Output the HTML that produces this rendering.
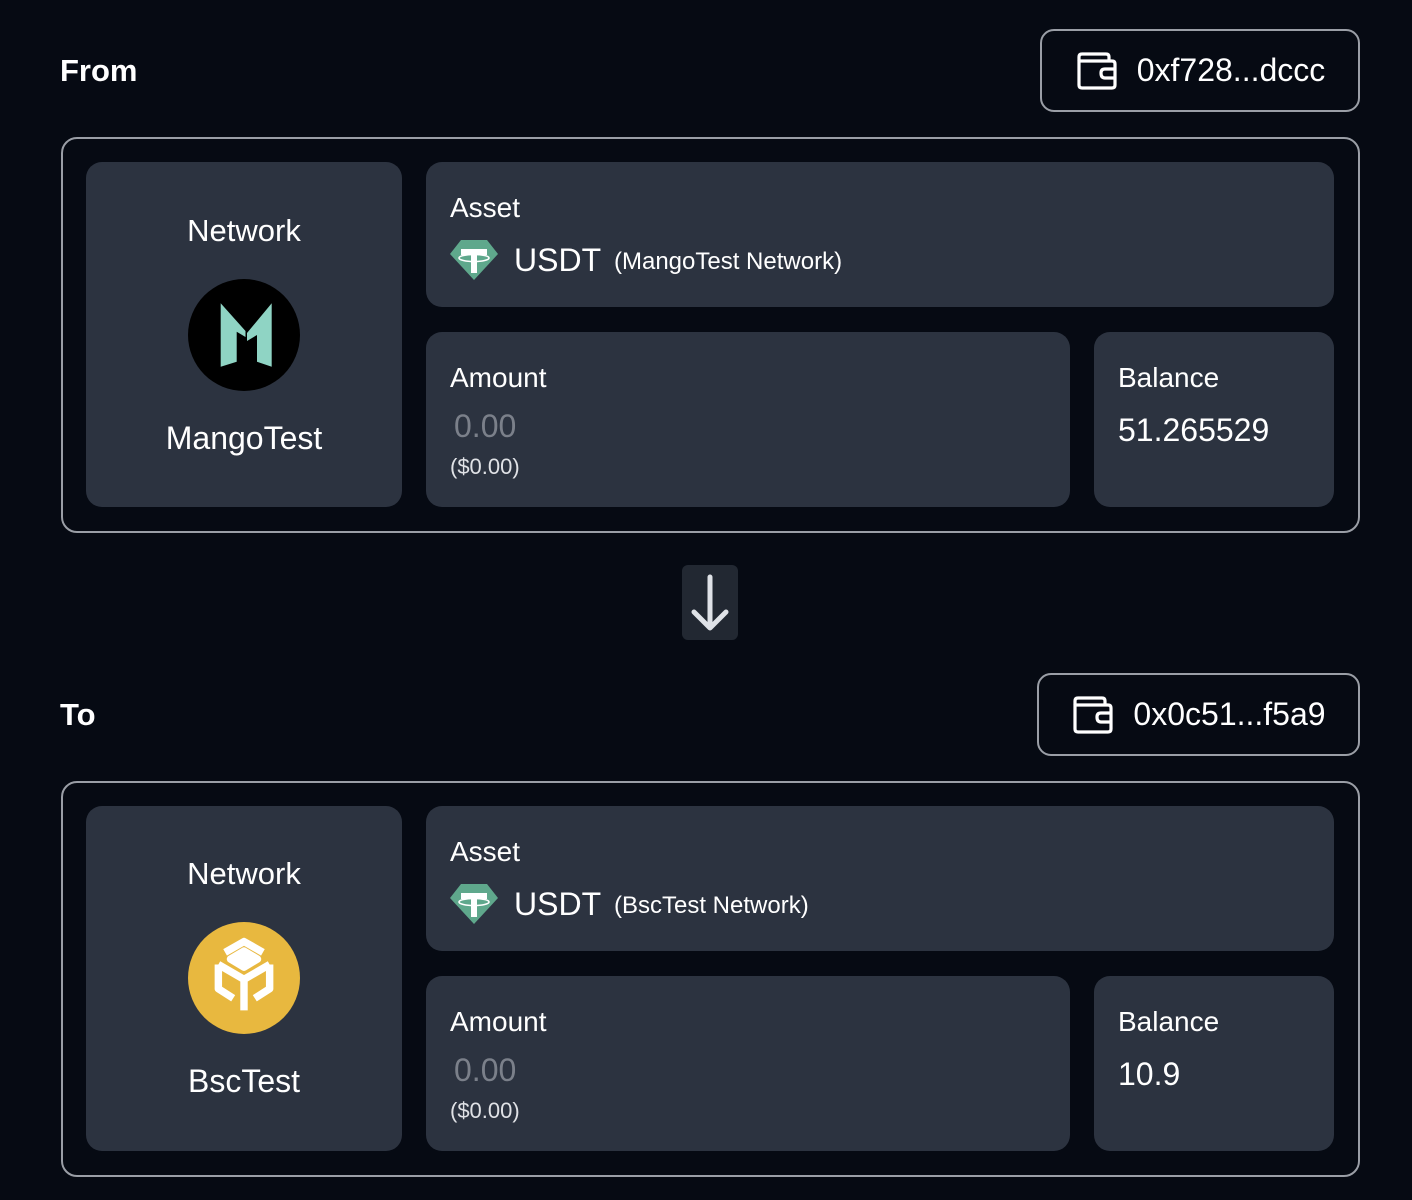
<!DOCTYPE html>
<html><head><style>
*{margin:0;padding:0;box-sizing:border-box}
body{width:1412px;height:1200px;background:#060a13;font-family:"Liberation Sans",sans-serif;color:#fff;position:relative;overflow:hidden}
.a{position:absolute}
.lbl{font-weight:bold;font-size:31px}
.btn{border:2px solid #9a9ea6;border-radius:14px;display:flex;align-items:center;justify-content:center;gap:18px;font-size:32px}
.box{border:2px solid #9a9ea6;border-radius:16px}
.card{background:#2c3340;border-radius:16px}
.t27{font-size:28px}
</style></head><body>
<svg width="0" height="0" style="position:absolute"><defs>
<symbol id="w" viewBox="0 0 44 44"><path d="M4 8 Q4 5 7 5 H31 Q34 5 34 8 V12 M4 12 H37 Q40 12 40 15 V36 Q40 39 37 39 H7 Q4 39 4 36 Z M40 20 H30 Q26 20 26 24 Q26 29 30 29 H40" fill="none" stroke="#fff" stroke-width="3.2" stroke-linejoin="round"/><path d="M4 8 V12" stroke="#fff" stroke-width="3.2"/></symbol>
<symbol id="t" viewBox="0 0 50 44"><path d="M12 2 H38 L49 16 L25 42 L1 16 Z" fill="#5fa88c"/><path d="M12 11 H38 V17 H28 V35 H22 V17 H12 Z" fill="#fff"/><ellipse cx="25" cy="20" rx="15" ry="3.5" fill="none" stroke="#fff" stroke-width="1.6"/></symbol>
</defs></svg>

<div class="a lbl" style="left:60px;top:53px">From</div>
<div class="a btn" style="left:1040px;top:29px;width:320px;height:83px"><svg width="44" height="44"><use href="#w"/></svg><span>0xf728...dccc</span></div>
<div class="a box" style="left:61px;top:137px;width:1299px;height:396px"></div>
<div class="a card" style="left:86px;top:162px;width:316px;height:345px"></div>
<div class="a" style="left:86px;top:213px;width:316px;text-align:center;font-size:31px">Network</div>
<svg class="a" style="left:188px;top:279px" width="112" height="112" viewBox="0 0 112 112"><circle cx="56" cy="56" r="56" fill="#000"/><path d="M32.7 24.3 L57.5 52 V58 L48.7 52.7 V82.7 L32.7 87.7 Z M83.7 24.3 L59 54 V62 L69 56 V82.7 L83.7 87.7 Z" fill="#8fd4c4"/></svg>
<div class="a" style="left:86px;top:420px;width:316px;text-align:center;font-size:32px">MangoTest</div>
<div class="card a" style="left:426px;top:162px;width:908px;height:145px"></div>
<div class="a t27" style="left:450px;top:192px">Asset</div>
<svg class="a" style="left:449px;top:238px" width="50" height="44"><use href="#t"/></svg>
<div class="a" style="left:514px;top:242px;font-size:32px">USDT</div>
<div class="a" style="left:614px;top:248px;font-size:24px">(MangoTest Network)</div>
<div class="card a" style="left:426px;top:332px;width:644px;height:175px"></div>
<div class="a t27" style="left:450px;top:362px">Amount</div>
<div class="a" style="left:454px;top:408px;font-size:32px;color:#7b808a">0.00</div>
<div class="a" style="left:450px;top:454px;font-size:22px;color:#e0e2e6">($0.00)</div>
<div class="card a" style="left:1094px;top:332px;width:240px;height:175px"></div>
<div class="a t27" style="left:1118px;top:362px">Balance</div>
<div class="a" style="left:1118px;top:412px;font-size:32px">51.265529</div>

<div class="a" style="left:682px;top:565px;width:56px;height:75px;background:#222832;border-radius:6px"></div>
<svg class="a" style="left:682px;top:565px" width="56" height="75"><path d="M28 12 V63 M12 47 L28 63 L44 47" fill="none" stroke="#dfe2e7" stroke-width="5" stroke-linecap="round" stroke-linejoin="round"/></svg>

<div class="a lbl" style="left:60px;top:697px">To</div>
<div class="a btn" style="left:1037px;top:673px;width:323px;height:83px"><svg width="44" height="44"><use href="#w"/></svg><span>0x0c51...f5a9</span></div>
<div class="a box" style="left:61px;top:781px;width:1299px;height:396px"></div>
<div class="a card" style="left:86px;top:806px;width:316px;height:345px"></div>
<div class="a" style="left:86px;top:856px;width:316px;text-align:center;font-size:31px">Network</div>
<svg class="a" style="left:188px;top:922px" width="112" height="112" viewBox="0 0 112 112"><circle cx="56" cy="56" r="56" fill="#e8b83f"/><g transform="translate(56 56) scale(1.35) translate(-56 -56)" fill="none" stroke="#fff" stroke-width="5.5" stroke-linejoin="round"><path d="M56 36 L66 42 L56 48 L46 42 Z" fill="#fff"/><path d="M37 46 V64 L48 71 M75 46 V64 L64 71 M42 37 L56 29 L70 37 M56 56 V80 M37 46 L56 57 L75 46"/></g></svg>
<div class="a" style="left:86px;top:1063px;width:316px;text-align:center;font-size:32px">BscTest</div>
<div class="card a" style="left:426px;top:806px;width:908px;height:145px"></div>
<div class="a t27" style="left:450px;top:836px">Asset</div>
<svg class="a" style="left:449px;top:882px" width="50" height="44"><use href="#t"/></svg>
<div class="a" style="left:514px;top:886px;font-size:32px">USDT</div>
<div class="a" style="left:614px;top:892px;font-size:24px">(BscTest Network)</div>
<div class="card a" style="left:426px;top:976px;width:644px;height:175px"></div>
<div class="a t27" style="left:450px;top:1006px">Amount</div>
<div class="a" style="left:454px;top:1052px;font-size:32px;color:#7b808a">0.00</div>
<div class="a" style="left:450px;top:1098px;font-size:22px;color:#e0e2e6">($0.00)</div>
<div class="card a" style="left:1094px;top:976px;width:240px;height:175px"></div>
<div class="a t27" style="left:1118px;top:1006px">Balance</div>
<div class="a" style="left:1118px;top:1056px;font-size:32px">10.9</div>
</body></html>
